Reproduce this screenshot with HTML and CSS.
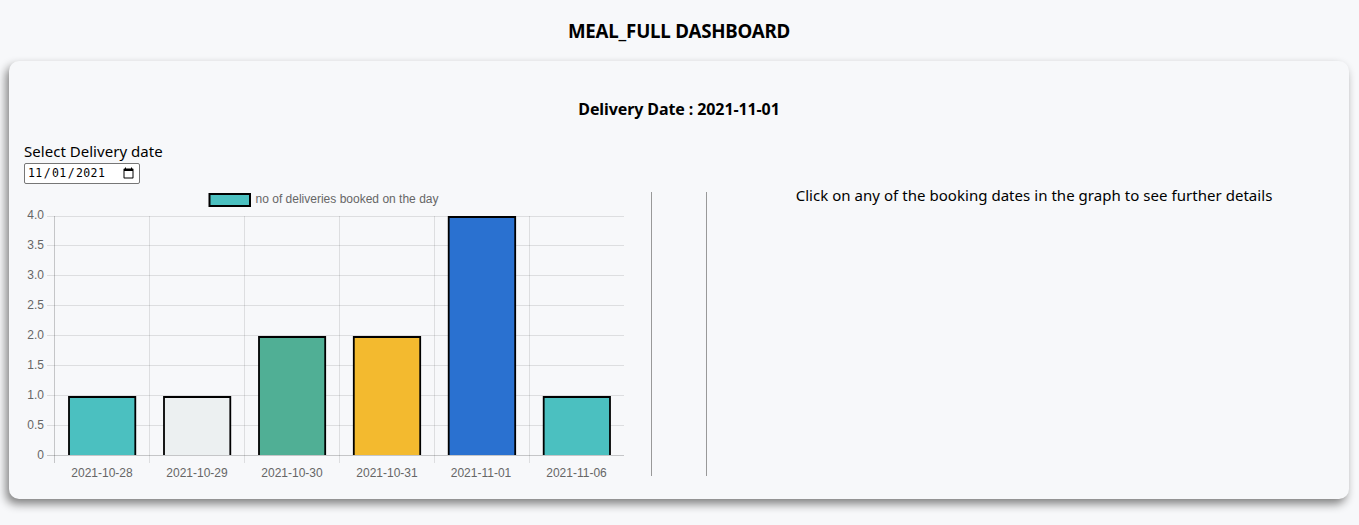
FILE: index.html
```html
<!DOCTYPE html>
<html lang="en-US">
<head>
<meta charset="utf-8">
<title>Meal_Full Dashboard</title>
<link rel="stylesheet" href="styles.css">
</head>
<body>
<h3 class="title"><span>MEAL_FULL DASHBOARD</span></h3>
<main class="card">
  <h4 class="subtitle"><span>Delivery Date : 2021-11-01</span></h4>
  <label class="label" for="date"><span>Select Delivery date</span></label>
  <input class="date" id="date" type="date" value="2021-11-01">
  <div class="content">
    <svg class="chart" width="604" height="300" viewBox="24 189 604 300">
      <rect x="209.5" y="194" width="40.5" height="12" fill="#4bc0c0" stroke="#000" stroke-width="2"/>
      <text x="255.5" y="203" textLength="183">no of deliveries booked on the day</text>
      <path class="grid" d="M47 216.5H624M47 245.5H624M47 275.5H624M47 305.5H624M47 335.5H624M47 365.5H624M47 395.5H624M47 425.5H624M149.5 216V463M244.5 216V463M339.5 216V463M434.5 216V463M529.5 216V463"/>
      <path class="axis" d="M54.5 216V463M47 455.5H624"/>
      <g class="ticks">
        <text x="44" y="219">4.0</text><text x="44" y="249">3.5</text><text x="44" y="279">3.0</text>
        <text x="44" y="309">2.5</text><text x="44" y="339">2.0</text><text x="44" y="369">1.5</text>
        <text x="44" y="399">1.0</text><text x="44" y="429">0.5</text><text x="44" y="459">0</text>
      </g>
      <g class="bars">
        <path fill="#4bc0c0" d="M69 455V397H135.3V455"/>
        <path fill="#ecf0f1" d="M164 455V397H230.3V455"/>
        <path fill="#50af95" d="M259 455V337H325.2V455"/>
        <path fill="#f3ba2f" d="M353.8 455V337H420.2V455"/>
        <path fill="#2a71d0" d="M448.7 455V217H515.2V455"/>
        <path fill="#4bc0c0" d="M543.7 455V397H610V455"/>
      </g>
      <g class="dates">
        <text x="102" y="477">2021-10-28</text><text x="197" y="477">2021-10-29</text>
        <text x="292" y="477">2021-10-30</text><text x="387" y="477">2021-10-31</text>
        <text x="481" y="477">2021-11-01</text><text x="576.5" y="477">2021-11-06</text>
      </g>
    </svg>
    <div class="divider"></div>
    <p class="hint"><span>Click on any of the booking dates in the graph to see further details</span></p>
  </div>
</main>
</body>
</html>
```
FILE: styles.css
```css
* { box-sizing: border-box; }
body {
  margin: 0;
  padding: 19px 10px 0 9px;
  height: 525px;
  overflow: hidden;
  background: #f7f8fa;
  color: #000;
  font: 16px/22px "Noto Sans", sans-serif;
}
.title {
  margin: 0 0 18px;
  font-size: 18.72px;
  line-height: 24px;
  text-align: center;
  letter-spacing: -0.2px;
}
.card {
  height: 438px;
  padding: 37px 15px 0;
  border-radius: 10px;
  background: #f7f8fa;
  box-shadow: -3px 5px 10px gray;
}
.subtitle {
  margin: 0 0 20px;
  font-size: 16px;
  text-align: center;
  letter-spacing: -0.1px;
}
.label {
  display: block;
  height: 23px;
  font-size: 15px;
  letter-spacing: 0.03px;
}
.date {
  display: block;
  width: 116px;
  height: 21px;
  margin: 0;
  padding: 0 2px;
  border: 1px solid #767676;
  border-radius: 2px;
  background: #fff;
  color: #000;
  font: 11.5px "DejaVu Sans Mono", monospace;
  letter-spacing: 0.4px;
}
.date::-webkit-calendar-picker-indicator {
  margin-left: 0;
  font-size: 13.33px;
}
.content {
  display: flex;
  margin-top: 5px;
}
.chart {
  flex: none;
  font: 12px "Liberation Sans", Arial, sans-serif;
  fill: #666;
}
.grid { stroke: rgba(0, 0, 0, 0.1); fill: none; }
.axis { stroke: rgba(0, 0, 0, 0.2); fill: none; }
.bars { stroke: #000; stroke-width: 1.8; }
.ticks { text-anchor: end; }
.dates { text-anchor: middle; }
.divider {
  flex: none;
  width: 56px;
  height: 284px;
  margin: 3px 0 0 23px;
  border: solid #999;
  border-width: 0 1px;
}
.hint {
  flex: 1;
  margin: -5px 0 0 27px;
  padding-right: 0;
  font-size: 15px;
  letter-spacing: 0.04px;
  text-align: center;
}
```
